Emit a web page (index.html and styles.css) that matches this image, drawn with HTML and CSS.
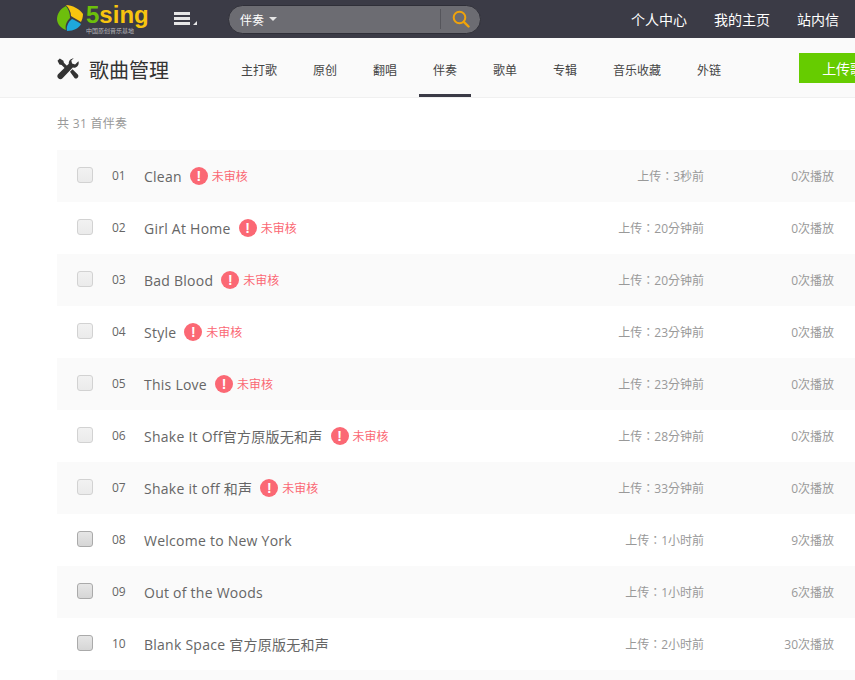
FILE: index.html
```html
<!DOCTYPE html>
<html>
<head>
    <title>歌曲管理</title>
    <link rel="stylesheet" href="styles.css">
</head>
<body>
    <div class="topbar">
        <div class="logo">
            <svg class="logo-mark" viewBox="0 0 26 26" width="26" height="26">
                <path fill="#6dbe0c" d="M9 1C3 4 0 9 0 14c0 5 4 9 9 11 -1-4 0-8 4-12C13 9 12 5 9 1z"/>
                <path fill="#f8c50f" d="M9 0c6 0 14 4 17 9 0 3-1 6-2 8 -3-2-7-4-10-6C14 7 12 3 9 0z"/>
                <path fill="#1ea8dc" d="M15 14c3 1 6 3 9 5 -2 4-7 7-14 7 -1-4 1-9 5-12z"/>
            </svg>
            <div class="logo-text">
                <div class="logo-name"><span class="logo-five">5</span>sing</div>
                <div class="logo-sub">中国原创音乐基地</div>
            </div>
        </div>
        <div class="menu-btn">
            <span></span><span></span><span></span>
            <i class="menu-corner"></i>
        </div>
        <div class="search">
            <div class="search-type">伴奏<i class="caret"></i></div>
            <div class="search-btn">
                <svg viewBox="0 0 18 18" width="18" height="18">
                    <circle cx="7.500" cy="7.500" r="5.800" fill="none" stroke="#f0a30a" stroke-width="2"/>
                    <path d="M11.800 11.800L16.500 16.500" stroke="#f0a30a" stroke-width="2.400" stroke-linecap="round"/>
                </svg>
            </div>
        </div>
        <div class="top-links">
            <a>个人中心</a>
            <a>我的主页</a>
            <a>站内信</a>
        </div>
    </div>

    <div class="subnav">
        <div class="page-title">
            <svg viewBox="0 0 22 22" width="22" height="22">
                <path fill="#333" d="M16.500 0.500c-3 0-5 2.500-4.700 5.300L1.300 16c-1.300 1.300-1.300 3 0 4.200s3 1.300 4.200 0L15.800 9.600c3 .6 5.800-1.700 5.900-4.700 0-.7-.1-1.200-.3-1.700l-3.300 3.200-3-.8-.8-3 3.200-3.100c-.3-.1-.6 0-1 0z"/>
                <path fill="#333" d="M0.500 2.800L2.800 0.500l3.600 2.300.5 2 4 4-2.300 2.300-4-4-2.200-.6zM13 13.800l2.500-2.500 5.300 5.300c.8.8.8 2 0 2.900l-.5.500c-.8.800-2 .8-2.800 0z"/>
            </svg>
            <h1>歌曲管理</h1>
        </div>
        <div class="tabs">
            <a>主打歌</a>
            <a>原创</a>
            <a>翻唱</a>
            <a class="active">伴奏</a>
            <a>歌单</a>
            <a>专辑</a>
            <a>音乐收藏</a>
            <a>外链</a>
        </div>
        <a class="upload-btn">上传歌曲</a>
    </div>

    <div class="content">
        <div class="total">共 31 首伴奏</div>
        <div class="song-list">
            <div class="song pending">
                <i class="check"></i><span class="num">01</span><span class="name">Clean</span>
                <i class="warn">!</i><span class="state">未审核</span>
                <span class="time">上传：3秒前</span><span class="plays">0次播放</span>
            </div>
            <div class="song pending">
                <i class="check"></i><span class="num">02</span><span class="name">Girl At Home</span>
                <i class="warn">!</i><span class="state">未审核</span>
                <span class="time">上传：20分钟前</span><span class="plays">0次播放</span>
            </div>
            <div class="song pending">
                <i class="check"></i><span class="num">03</span><span class="name">Bad Blood</span>
                <i class="warn">!</i><span class="state">未审核</span>
                <span class="time">上传：20分钟前</span><span class="plays">0次播放</span>
            </div>
            <div class="song pending">
                <i class="check"></i><span class="num">04</span><span class="name">Style</span>
                <i class="warn">!</i><span class="state">未审核</span>
                <span class="time">上传：23分钟前</span><span class="plays">0次播放</span>
            </div>
            <div class="song pending">
                <i class="check"></i><span class="num">05</span><span class="name">This Love</span>
                <i class="warn">!</i><span class="state">未审核</span>
                <span class="time">上传：23分钟前</span><span class="plays">0次播放</span>
            </div>
            <div class="song pending">
                <i class="check"></i><span class="num">06</span><span class="name">Shake It Off官方原版无和声</span>
                <i class="warn">!</i><span class="state">未审核</span>
                <span class="time">上传：28分钟前</span><span class="plays">0次播放</span>
            </div>
            <div class="song pending">
                <i class="check"></i><span class="num">07</span><span class="name">Shake it off 和声</span>
                <i class="warn">!</i><span class="state">未审核</span>
                <span class="time">上传：33分钟前</span><span class="plays">0次播放</span>
            </div>
            <div class="song">
                <i class="check"></i><span class="num">08</span><span class="name">Welcome to New York</span>
                <span class="time">上传：1小时前</span><span class="plays">9次播放</span>
            </div>
            <div class="song">
                <i class="check"></i><span class="num">09</span><span class="name">Out of the Woods</span>
                <span class="time">上传：1小时前</span><span class="plays">6次播放</span>
            </div>
            <div class="song">
                <i class="check"></i><span class="num">10</span><span class="name">Blank Space 官方原版无和声</span>
                <span class="time">上传：2小时前</span><span class="plays">30次播放</span>
            </div>
            <div class="song"></div>
        </div>
    </div>
</body>
</html>
```

FILE: styles.css
```css
html, body {
    height: 680px;
    overflow: hidden;
}

body {
    margin: 0;
    background-color: #fff;
    color: #555;
    font-family: "Open Sans", "Noto Sans CJK SC", sans-serif;
    font-size: 12px;
}

.topbar {
    display: flex;
    align-items: center;
    height: 38px;
    padding-left: 57px;
    background-color: #3b3b46;
}

.logo {
    display: flex;
    width: 117px;
    height: 38px;
    align-items: flex-start;
}

.logo-mark {
    margin-top: 5px;
    flex: none;
}

.logo-text {
    margin-left: 3px;
    margin-top: 3px;
}

.logo-name {
    color: #f8c50f;
    font-family: "Liberation Sans", sans-serif;
    font-size: 24px;
    font-weight: bold;
    line-height: 24px;
}

.logo-five {
    color: #6cc00a;
}

.logo-sub {
    color: #b9b9bd;
    font-family: "Noto Sans CJK SC", sans-serif;
    font-size: 6px;
    line-height: 7px;
    white-space: nowrap;
}

.menu-btn {
    position: relative;
    width: 16px;
    margin-right: 38px;
}

.menu-btn span {
    display: block;
    height: 3px;
    margin-bottom: 2px;
    background-color: #e6e6e6;
}

.menu-corner {
    position: absolute;
    right: -7px;
    bottom: 2px;
    border-left: 4px solid transparent;
    border-bottom: 4px solid #e6e6e6;
}

.search {
    display: flex;
    align-items: center;
    justify-content: space-between;
    box-sizing: border-box;
    width: 253px;
    height: 29px;
    padding-left: 11px;
    background-color: #6c6c72;
    border: 1px solid #2f2f38;
    border-radius: 15px;
}

.search-type {
    display: flex;
    align-items: center;
    color: #fff;
    font-family: "Noto Sans CJK SC", sans-serif;
}

.caret {
    margin-left: 5px;
    border-left: 4px solid transparent;
    border-right: 4px solid transparent;
    border-top: 4px solid #e6e6e6;
}

.search-btn {
    display: flex;
    align-items: center;
    justify-content: center;
    width: 39px;
    height: 20px;
    border-left: 1px solid #55555b;
}

.top-links {
    display: flex;
    gap: 27px;
    margin-left: 150px;
    color: #fff;
    font-family: "Noto Sans CJK SC", sans-serif;
    font-size: 14px;
    white-space: nowrap;
}

.subnav {
    display: flex;
    align-items: center;
    box-sizing: border-box;
    width: 1000px;
    height: 60px;
    padding-left: 57px;
    background-color: #fafafa;
    border-bottom: 1px solid #f0f0f0;
}

.page-title {
    display: flex;
    align-items: center;
    width: 170px;
    margin-top: 3px;
}

.page-title h1 {
    margin: 0 0 0 10px;
    color: #333;
    font-family: "Noto Sans CJK SC", sans-serif;
    font-size: 20px;
    font-weight: normal;
}

.tabs {
    display: flex;
    gap: 8px;
    height: 59px;
    font-family: "Noto Sans CJK SC", sans-serif;
}

.tabs a {
    box-sizing: border-box;
    height: 59px;
    padding: 0 14px;
    color: #444;
    line-height: 63px;
}

.tabs a.active {
    border-bottom: 3px solid #3b3b46;
}

.upload-btn {
    box-sizing: border-box;
    width: 120px;
    height: 30px;
    margin-left: 64px;
    padding-left: 23px;
    background-color: #66cc00;
    color: #fff;
    font-family: "Noto Sans CJK SC", sans-serif;
    font-size: 14px;
    line-height: 30px;
}

.content {
    padding-left: 57px;
}

.total {
    height: 52px;
    color: #999;
    letter-spacing: 0.3px;
    line-height: 51px;
}

.song {
    display: flex;
    align-items: center;
    height: 52px;
    padding: 0 21px 0 20px;
}

.song:nth-child(odd) {
    background-color: #fafafa;
}

.check {
    box-sizing: border-box;
    width: 16px;
    height: 16px;
    margin-top: -2px;
    background-image: linear-gradient(#e6e6e6, #d6d6d6);
    border: 1px solid #aaa;
    border-radius: 3px;
}

.pending .check {
    background-image: linear-gradient(#f2f2f2, #ebebeb);
    border-color: #d2d2d2;
}

.num {
    width: 32px;
    margin-left: 19px;
    margin-top: -2px;
    color: #666;
}

.name {
    color: #666;
    font-size: 14px;
    letter-spacing: 0.25px;
}

.warn {
    width: 18px;
    height: 18px;
    margin-left: 8px;
    background-color: #fb6874;
    border-radius: 50%;
    color: #fff;
    font-family: "Liberation Sans", sans-serif;
    font-size: 14px;
    font-style: normal;
    font-weight: bold;
    line-height: 18px;
    text-align: center;
}

.state {
    margin-left: 4px;
    margin-top: -1px;
    color: #fb6874;
}

.time {
    margin-left: auto;
    margin-top: -1px;
    color: #999;
    font-family: "Open Sans", "Noto Sans CJK TC", sans-serif;
}

.plays {
    width: 130px;
    margin-top: -1px;
    color: #999;
    text-align: right;
}
```
